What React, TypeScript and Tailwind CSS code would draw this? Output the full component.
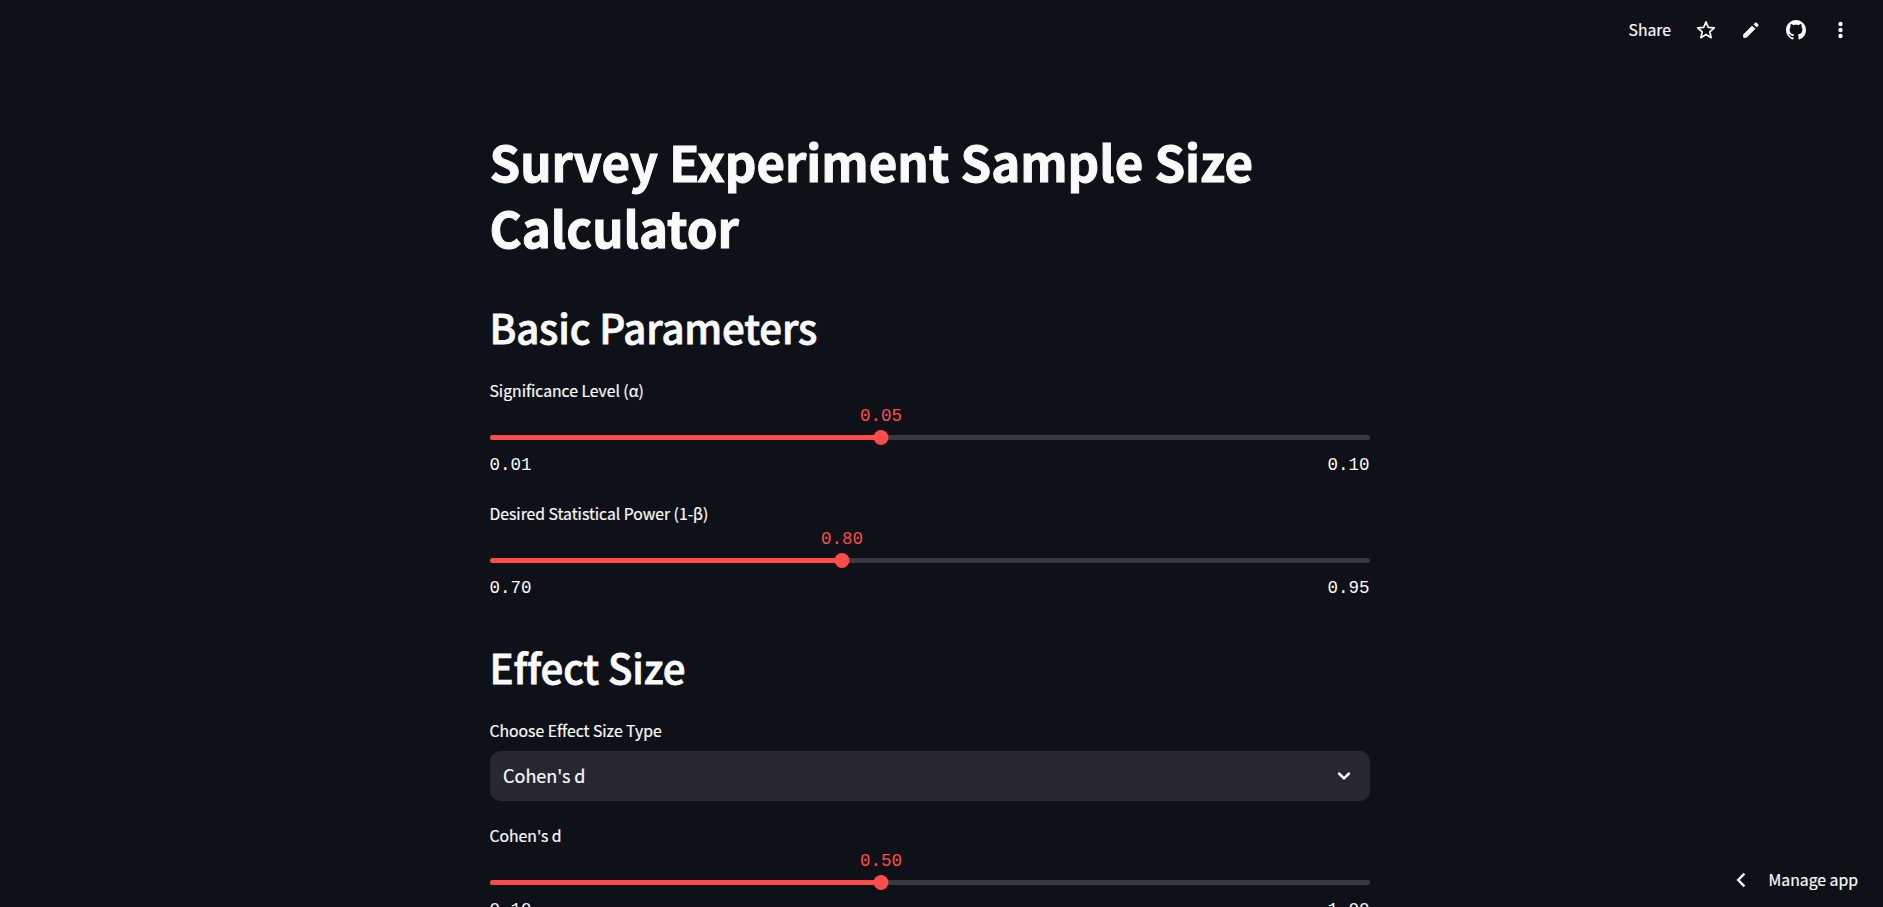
import React from 'react';

type SliderProps = {
  label: string;
  value: number;
  min: number;
  max: number;
};

function Slider({ label, value, min, max }: SliderProps) {
  const percent = ((value - min) / (max - min)) * 100;

  return (
    <div className="h-[103px] shrink-0">
      <div className="-ml-[0.5px] h-7 pt-px text-[15.75px] leading-7 tracking-[-0.02px] [-webkit-text-stroke:0.2px_#fafafa]">
        {label}
      </div>
      <div className="h-[31px] font-['Liberation_Mono',monospace] text-[17.5px] leading-6 text-[#ff4b4b]">
        <div className="w-fit -translate-x-1/2" style={{ marginLeft: `${percent}%` }}>
          {value.toFixed(2)}
        </div>
      </div>
      <div className="relative h-[5px] rounded-full bg-[#363940]">
        <div className="h-full rounded-full bg-[#ff4b4b]" style={{ width: `${percent}%` }} />
        <div
          className="absolute -top-[5px] h-[15px] w-[15px] -translate-x-1/2 rounded-full bg-[#ff4b4b]"
          style={{ left: `${percent}%` }}
        />
      </div>
      <div className="-ml-[0.5px] mr-[0.5px] mt-[13px] flex justify-between font-['Liberation_Mono',monospace] text-[17.5px] leading-6">
        <span>{min.toFixed(2)}</span>
        <span>{max.toFixed(2)}</span>
      </div>
    </div>
  );
}

function SectionTitle({ children }: { children: React.ReactNode }) {
  return (
    <h2 className="-ml-[0.5px] mb-[22px] h-[54px] shrink-0 text-[40.2px] font-medium leading-[54px] tracking-[-0.15px] [-webkit-text-stroke:0.8px_#fafafa]">
      {children}
    </h2>
  );
}

export default function App() {
  return (
    <div className="relative h-screen overflow-hidden bg-[#0e1117] font-['Noto_Sans_CJK_SC',sans-serif] text-[#fafafa]">
      <header className="flex h-[60px] items-center justify-end pr-[40px]">
        <span className="mr-[25px] text-[15.75px] leading-6 [-webkit-text-stroke:0.2px_#fafafa]">Share</span>
        <svg viewBox="0 0 20 20" className="mr-[27px] h-5 w-5" fill="none" stroke="currentColor" strokeWidth="1.7">
          <path d="M10 1.8 12.3 7.3 18.3 7.8 13.8 11.8 15.1 17.7 10 14.6 4.9 17.7 6.2 11.8 1.7 7.8 7.7 7.3Z" strokeLinejoin="round" />
        </svg>
        <svg viewBox="0 0 16 16" className="mr-[27px] h-4 w-4" fill="currentColor" stroke="currentColor" strokeLinejoin="round">
          <path d="M.7 12.6V15.3H3.4L11.9 6.8 9.2 4.1Z" />
          <path d="M10.9 2.4 12.5.8Q12.9.5 13.3.8L15.2 2.7Q15.5 3.1 15.2 3.5L13.6 5.1Z" strokeWidth=".6" />
        </svg>
        <svg viewBox="0 0 16 16" className="mr-[32px] h-5 w-5" fill="currentColor">
          <path d="M8 0C3.58 0 0 3.58 0 8c0 3.54 2.29 6.53 5.47 7.59.4.07.55-.17.55-.38 0-.19-.01-.82-.01-1.49-2.01.37-2.53-.49-2.69-.94-.09-.23-.48-.94-.82-1.13-.28-.15-.68-.52-.01-.53.63-.01 1.08.58 1.23.82.72 1.21 1.87.87 2.33.66.07-.52.28-.87.51-1.07-1.78-.2-3.64-.89-3.64-3.95 0-.87.31-1.59.82-2.15-.08-.2-.36-1.02.08-2.12 0 0 .67-.21 2.2.82.64-.18 1.32-.27 2-.27s1.36.09 2 .27c1.53-1.04 2.2-.82 2.2-.82.44 1.1.16 1.92.08 2.12.51.56.82 1.27.82 2.15 0 3.07-1.87 3.75-3.65 3.95.29.25.54.73.54 1.48 0 1.07-.01 1.93-.01 2.2 0 .21.15.46.55.38A8.01 8.01 0 0 0 16 8c0-4.42-3.58-8-8-8z" />
        </svg>
        <svg viewBox="0 0 5 18" className="h-[18px] w-[5px]" fill="currentColor">
          <circle cx="2.5" cy="3" r="2.2" />
          <circle cx="2.5" cy="9" r="2.2" />
          <circle cx="2.5" cy="15" r="2.2" />
        </svg>
      </header>

      <main className="ml-[490px] flex w-[880px] flex-col pt-[68px]">
        <h1 className="-ml-[0.5px] mb-10 w-full shrink-0 text-[49.2px] font-bold leading-[66px] tracking-[-0.03px] [-webkit-text-stroke:1px_#fafafa]">
          Survey Experiment Sample Size Calculator
        </h1>

        <SectionTitle>Basic Parameters</SectionTitle>
        <div className="mb-[38px] flex flex-col gap-5">
          <Slider label="Significance Level (α)" value={0.05} min={0.01} max={0.1} />
          <Slider label="Desired Statistical Power (1-β)" value={0.8} min={0.7} max={0.95} />
        </div>

        <SectionTitle>Effect Size</SectionTitle>
        <div className="mb-5">
          <div className="-ml-[0.5px] mb-[7px] h-7 pt-px text-[15.75px] leading-7 tracking-[-0.02px] [-webkit-text-stroke:0.2px_#fafafa]">
            Choose Effect Size Type
          </div>
          <div className="flex h-[50px] items-center justify-between rounded-[10px] bg-[#262730] pl-[13px] pr-[19px]">
            <span className="pb-0.5 text-[18px] leading-6 [-webkit-text-stroke:0.2px_#fafafa]">Cohen's d</span>
            <svg
              viewBox="0 0 14 10"
              className="h-2.5 w-3.5"
              fill="none"
              stroke="currentColor"
              strokeWidth="2.5"
              strokeLinecap="round"
            >
              <path d="M2 2.5 7 7.3 12 2.5" />
            </svg>
          </div>
        </div>
        <Slider label="Cohen's d" value={0.5} min={0.1} max={1} />
      </main>

      <button className="absolute bottom-3 right-[25px] flex h-[30px] items-center gap-[23px] text-[15.75px] [-webkit-text-stroke:0.2px_#fafafa]">
        <svg viewBox="0 0 10 16" className="h-4 w-2.5" fill="none" stroke="currentColor" strokeWidth="2.4">
          <path d="M8.4 1.6 2.2 8 8.4 14.4" />
        </svg>
        Manage app
      </button>
    </div>
  );
}
